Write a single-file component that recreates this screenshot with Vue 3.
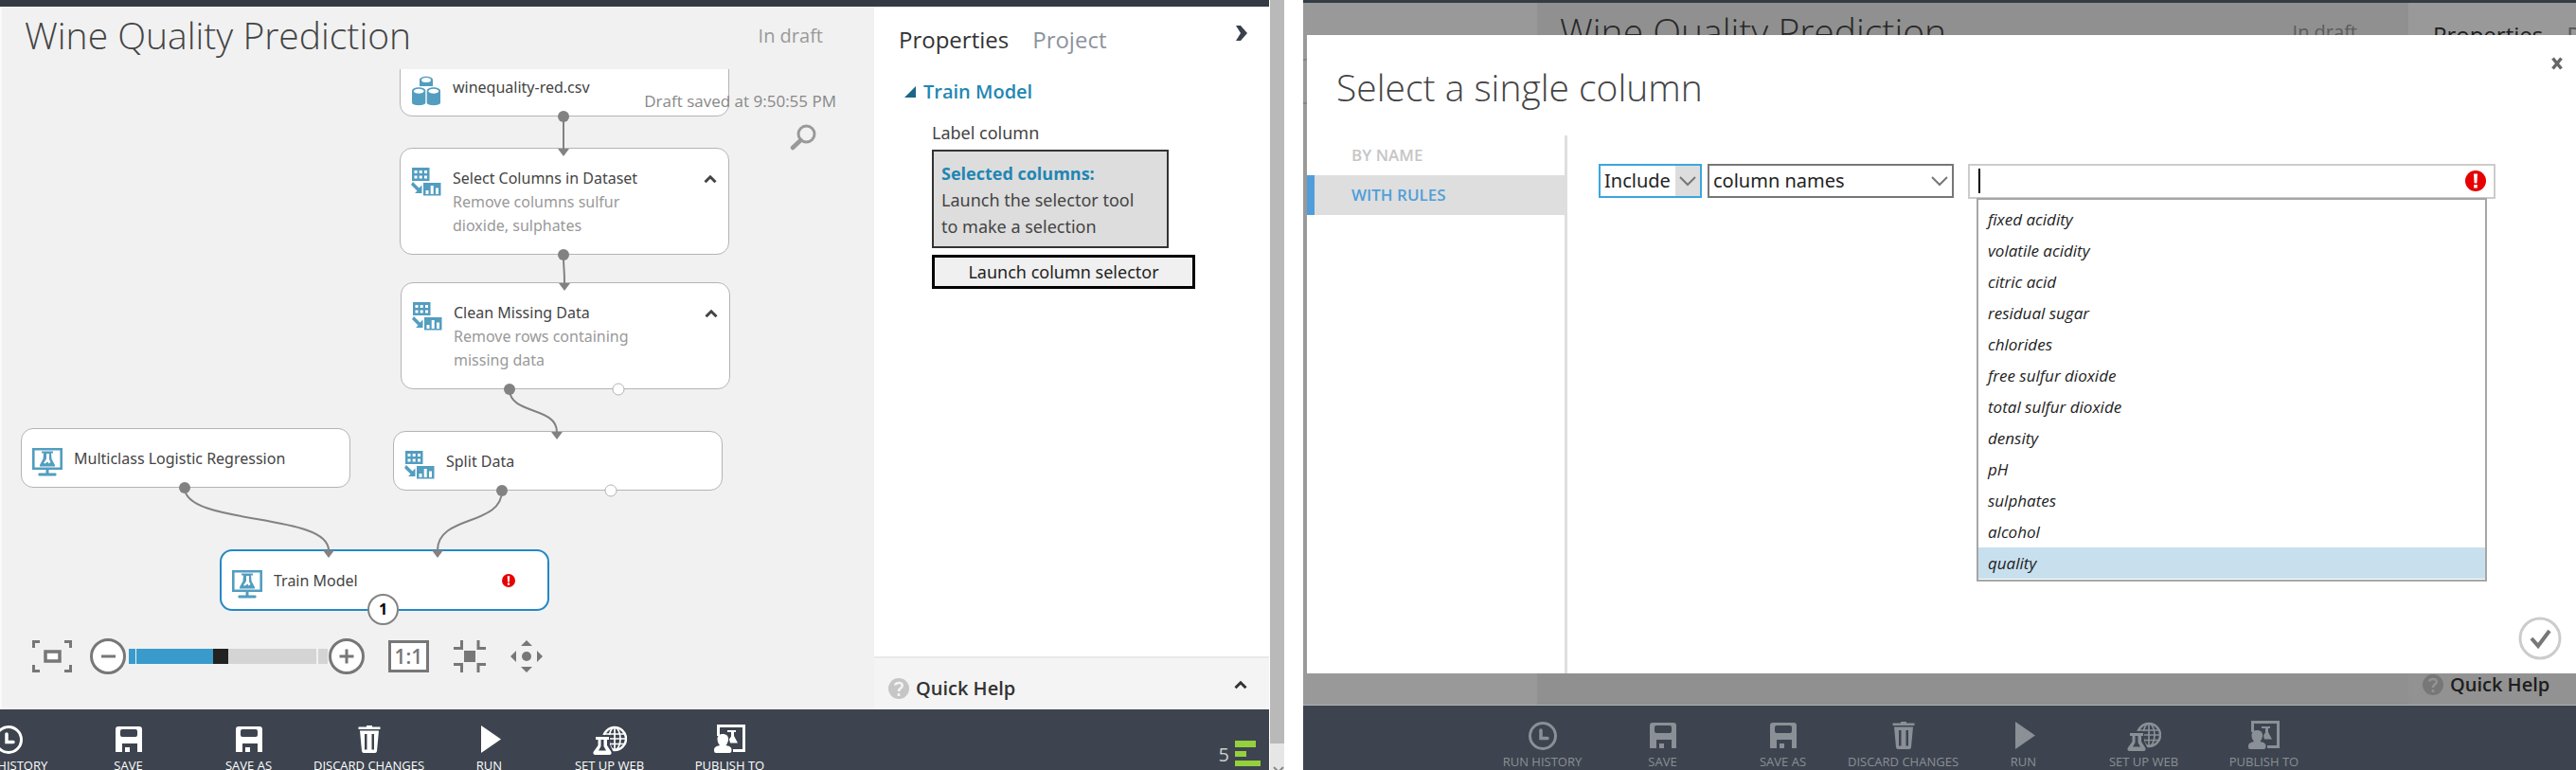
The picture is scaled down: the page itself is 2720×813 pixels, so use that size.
<script setup>
import { ref } from 'vue'

const nodes = [
  { id: 'csv', title: 'winequality-red.csv', icon: 'data', x: 422, y: -13, h: 63 },
  { id: 'select', title: 'Select Columns in Dataset', lines: ['Remove columns sulfur', 'dioxide, sulphates'], icon: 'transform', x: 422, y: 83, h: 113 },
  { id: 'clean', title: 'Clean Missing Data', lines: ['Remove rows containing', 'missing data'], icon: 'transform', x: 423, y: 225, h: 113 },
  { id: 'split', title: 'Split Data', icon: 'transform', x: 415, y: 382, h: 63 },
  { id: 'regression', title: 'Multiclass Logistic Regression', icon: 'model', x: 22, y: 379, h: 63 },
  { id: 'train', title: 'Train Model', icon: 'model', x: 232, y: 507, h: 65, selected: true },
]

const edges = [
  { from: [595, 50], to: [595, 84] },
  { from: [595, 196], to: [596, 226] },
  { from: [538, 338], to: [588, 383] },
  { from: [195, 442], to: [347, 508] },
  { from: [530, 445], to: [462, 508] },
]

const openPorts = [[653, 338], [645, 445]]

function curve({ from, to }) {
  const bend = Math.round((to[1] - from[1]) * 0.6)
  return `M${from[0]} ${from[1]}C${from[0]} ${from[1] + bend} ${to[0]} ${to[1] - bend} ${to[0]} ${to[1]}`
}

function arrow({ to }) {
  return `M${to[0] - 6} ${to[1]}h12l-6 8z`
}

const commands = [
  { label: ['RUN HISTORY'], icon: 'history' },
  { label: ['SAVE'], icon: 'save' },
  { label: ['SAVE AS'], icon: 'save' },
  { label: ['DISCARD CHANGES'], icon: 'trash' },
  { label: ['RUN'], icon: 'run' },
  { label: ['SET UP WEB', 'SERVICE'], icon: 'web' },
  { label: ['PUBLISH TO', 'GALLERY'], icon: 'publish' },
]

const columns = [
  'fixed acidity', 'volatile acidity', 'citric acid', 'residual sugar', 'chlorides',
  'free sulfur dioxide', 'total sulfur dioxide', 'density', 'pH', 'sulphates', 'alcohol', 'quality',
]
const highlighted = ref('quality')
const zoom = ref(46)
const columnText = ref('')
</script>

<template>
  <div class="page">
    <svg class="sprite" aria-hidden="true">
      <symbol id="i-data" viewBox="0 0 32 32">
        <g fill="#529dc0">
          <path d="M9 4.500C9 -.5 23 -.5 23 4.500V11H9z" />
          <path d="M1 16C1 11 15.300 11 15.300 16V28.500C15.300 32 1 32 1 28.500z" />
          <path d="M16.700 16C16.700 11 31 11 31 16V28.500C31 32 16.700 32 16.700 28.500z" />
        </g>
        <g fill="#fff">
          <ellipse cx="16" cy="4.500" rx="5" ry="2.500" />
          <ellipse cx="8.200" cy="16.300" rx="5.300" ry="2.500" />
          <ellipse cx="23.800" cy="16.300" rx="5.300" ry="2.500" />
        </g>
      </symbol>
      <symbol id="i-transform" viewBox="0 0 32 32">
        <path fill="#529dc0" d="M1 1h18.500v14H1zM13 17h18.500v13.500H13zM2 16l6.500 6.500 3-3V28H4l2.500-2.500L0 19z" />
        <path fill="#fff" d="M3.500 4h3v3h-3zM8.700 4h3v3h-3zM14 4h3v3h-3zM3.500 9.500h3v3h-3zM8.700 9.500h3v3h-3zM14 9.500h3v3h-3zM15.500 25h3v4h-3zM20.700 20h3v9h-3zM26 22.500h3V29h-3z" />
      </symbol>
      <symbol id="i-model" viewBox="0 0 32 32">
        <path fill="none" stroke="#529dc0" stroke-width="2.600" d="M1.300 2.300h29.400v20.500H1.300z" />
        <path fill="#529dc0" d="M14.500 23h3v4.500h7c1.500 0 1.500 3 0 3h-17c-1.500 0-1.500-3 0-3h7zM10 4.500h12v2h-2l.500 6 3.500 6.500v1.500H8V19l3.500-6.500.500-6H10z" />
        <path fill="#fff" d="M15 7h3v6l1.500 3-2 1.500-1-2-3 2-1.500-.5L15 12.500z" />
      </symbol>
      <symbol id="i-caret-up" viewBox="0 0 14 10">
        <path fill="none" stroke="currentColor" stroke-width="3" d="M1.500 8.300 7 2.800l5.500 5.500" />
      </symbol>
      <symbol id="i-alert" viewBox="0 0 22 22">
        <circle cx="11" cy="11" r="11" fill="#e60000" />
        <path fill="#fff" d="M9 3.500h4l-.6 10H9.600zM9.200 15h3.600v3.500H9.200z" />
      </symbol>
      <symbol id="i-help" viewBox="0 0 22 22">
        <circle cx="11" cy="11" r="11" fill="#c6c6c6" />
        <path fill="none" stroke="#f4f4f4" stroke-width="2.600" d="M7 7.500C8 4 15 4 14.800 8c0 2.500-3.800 2.800-3.800 6M11 16v3" />
      </symbol>
      <symbol id="i-history" viewBox="0 0 36 32">
        <circle cx="18" cy="16" r="13.500" fill="none" stroke="currentColor" stroke-width="3" />
        <path fill="none" stroke="currentColor" stroke-width="3.500" stroke-linecap="round" d="M16 10v8.500h7" />
      </symbol>
      <symbol id="i-save" viewBox="0 0 36 32">
        <path fill="currentColor" fill-rule="evenodd" d="M7 2h22q3 0 3 3v24h-5v-9H11v9H4V5q0-3 3-3zM11 5q-2 0-2 2v4q0 2 2 2h14q2 0 2-2V7q0-2-2-2zM14 24h5v5h-5z" />
      </symbol>
      <symbol id="i-trash" viewBox="0 0 36 32">
        <path fill="currentColor" fill-rule="evenodd" d="M15 1h6v1.500h8.500v2.500H6.500V2.500H15zM8 6.500h20L26 28q-.3 2-2 2H12q-1.700 0-2-2zM13 10v16.500h2.500V10zM20.500 10v16.500H23V10z" />
      </symbol>
      <symbol id="i-run" viewBox="0 0 36 32">
        <path fill="currentColor" d="M9 1 30 15.500 9 30z" />
      </symbol>
      <symbol id="i-web" viewBox="0 0 36 32">
        <g fill="none" stroke="currentColor" stroke-width="1.700">
          <circle cx="23" cy="15" r="12" stroke-width="2.500" />
          <ellipse cx="23" cy="15" rx="6" ry="12" />
          <path d="M23 3v24M12 10h22M11 15h24M12 20.500h22" />
        </g>
        <path fill="#3d444f" d="M0 11h18v10l5 11H0z" />
        <path fill="currentColor" fill-rule="evenodd" d="M3 13h14v3h-2v6l4.500 7q.5 3-2 3H2.500Q0 32 .5 29L5.500 22v-6H3zM8.500 16v7L6 27.500h8L11.500 23v-7z" />
      </symbol>
      <symbol id="i-publish" viewBox="0 0 36 32">
        <path fill="none" stroke="currentColor" stroke-width="3" d="M5.500 12V1.500h27v26H21" />
        <path fill="currentColor" d="M10 10c8 0 7 8 3.500 12 5 1 6 2.500 6 5 0 3-2 3-3 3h-13C2.500 30 1 30 1 27c0-2.500 1.500-4 6-5-3.500-4-4-12 3-12zM15 6h9v2h-2v4l4 7.500h-8l-1-4 2-3V8h-4z" />
      </symbol>
    </svg>

    <section class="screen screen-editor">
      <div class="topbar"></div>
      <div class="workspace">
        <main class="experiment">
          <header class="experiment-head">
            <h1>Wine Quality Prediction</h1>
            <span class="status">In draft</span>
          </header>
          <div class="canvas">
            <article
              v-for="n in nodes"
              :key="n.id"
              class="node"
              :class="{ selected: n.selected }"
              :style="{ left: n.x + 'px', top: n.y + 'px', height: n.h + 'px' }"
            >
              <svg class="node-icon"><use :href="'#i-' + n.icon" /></svg>
              <div class="node-text">
                <h2>{{ n.title }}</h2>
                <p v-for="line in n.lines" :key="line">{{ line }}</p>
              </div>
              <button v-if="n.lines" class="plain node-toggle" aria-label="Collapse">
                <svg width="14" height="10"><use href="#i-caret-up" /></svg>
              </button>
              <svg v-if="n.selected" class="node-alert"><use href="#i-alert" /></svg>
            </article>
            <svg class="edges" aria-hidden="true">
              <g v-for="(e, i) in edges" :key="i">
                <path class="edge" :d="curve(e)" />
                <path class="head" :d="arrow(e)" />
                <circle class="head" :cx="e.from[0]" :cy="e.from[1]" r="6" />
              </g>
              <circle v-for="(p, i) in openPorts" :key="'p' + i" class="open-port" :cx="p[0]" :cy="p[1]" r="6" />
            </svg>
            <span class="port-badge">1</span>

            <div class="canvas-info">
              <span>Draft saved at 9:50:55 PM</span>
              <button class="plain search" aria-label="Search">
                <svg width="28" height="28" viewBox="0 0 28 28" fill="none" stroke="#999">
                  <circle cx="17.500" cy="10.500" r="8.500" stroke-width="3" />
                  <path d="M11.500 17 3 25" stroke-width="4.500" stroke-linecap="round" />
                </svg>
              </button>
            </div>

            <div class="zoombar">
              <button class="plain fit" aria-label="Zoom to fit">
                <svg width="42" height="34" viewBox="0 0 42 34" fill="none" stroke="#777" stroke-width="3">
                  <path d="M1.500 8V1.500H8M34 1.500h6.500V8M1.500 26v6.500H8M34 32.500h6.500V26" />
                  <path fill="#fff" stroke-width="3.500" d="M14 12h15v10H14z" />
                </svg>
              </button>
              <button class="plain" aria-label="Zoom out">
                <svg width="38" height="38" viewBox="0 0 38 38" fill="#fff" stroke="#777" stroke-width="3">
                  <circle cx="19" cy="19" r="17.500" /><path d="M12 19h15" />
                </svg>
              </button>
              <input v-model="zoom" class="zoom" type="range" min="0" max="100" aria-label="Zoom" />
              <button class="plain" aria-label="Zoom in">
                <svg width="38" height="38" viewBox="0 0 38 38" fill="#fff" stroke="#777" stroke-width="3">
                  <circle cx="19" cy="19" r="17.500" /><path d="M11.500 19h15M19 11.500v15" />
                </svg>
              </button>
              <button class="actual">1:1</button>
              <button class="plain shrink" aria-label="Collapse all">
                <svg width="34" height="34" viewBox="0 0 34 34" fill="none" stroke="#777" stroke-width="3">
                  <path d="M0 8.500h8.500V0M26 0v8.500h8M0 25.500h8.500V34M26 34v-8.500h8" />
                  <path fill="#777" stroke="none" d="M11 11h12v12H11z" />
                </svg>
              </button>
              <button class="plain" aria-label="Pan">
                <svg width="34" height="34" viewBox="0 0 34 34" fill="#777">
                  <circle cx="17" cy="17" r="5" />
                  <path d="M17 0l6 6H11zM17 34l6-6H11zM0 17l6-6v12zM34 17l-6-6v12z" />
                </svg>
              </button>
            </div>
          </div>
        </main>

        <aside class="properties">
          <nav class="panel-tabs">
            <a href="#properties" class="active">Properties</a>
            <a href="#project">Project</a>
            <button class="plain" aria-label="Collapse panel">
              <svg width="14" height="18" viewBox="0 0 14 18"><path fill="#3a414c" d="M1 1h5l7 8-7 8H1l5-8z" /></svg>
            </button>
          </nav>
          <h3>
            <svg width="12" height="12" viewBox="0 0 12 12"><path fill="#1b6688" d="M12 0v12H0z" /></svg>
            Train Model
          </h3>
          <div class="field">
            <span>Label column</span>
            <div class="selection">
              <strong>Selected columns:</strong>
              Launch the selector tool to make a selection
            </div>
            <button class="launch">Launch column selector</button>
          </div>
          <footer class="quick-help">
            <svg width="22" height="22"><use href="#i-help" /></svg>
            <b>Quick Help</b>
            <button class="plain" aria-label="Expand help">
              <svg width="14" height="10"><use href="#i-caret-up" /></svg>
            </button>
          </footer>
        </aside>
      </div>
      <footer class="commandbar">
        <button v-for="c in commands" :key="c.label[0]" class="plain command">
          <svg width="36" height="32"><use :href="'#i-' + c.icon" /></svg>
          <span v-for="l in c.label" :key="l">{{ l }}</span>
        </button>
        <div class="jobs">
          <span>5</span>
          <svg width="28" height="28" viewBox="0 0 28 28" fill="#94d13d"><path d="M0 0h22v7H0zM0 11h12v6H0zM0 21h27v6H0z" /></svg>
        </div>
      </footer>
    </section>

    <div class="scrollbar">
      <div class="scroll-thumb"></div>
      <svg width="15" height="28" viewBox="0 0 15 28" fill="none" stroke="#888" stroke-width="2"><path d="m4 25 5 5 5-5" /></svg>
    </div>

    <section class="screen screen-dialog">
      <div class="topbar"></div>
      <div class="workspace dimmed">
        <aside class="experiments-list"><i></i><i></i></aside>
        <main class="experiment">
          <header class="experiment-head">
            <h1>Wine Quality Prediction</h1>
            <span class="status">In draft</span>
          </header>
        </main>
        <aside class="properties">
          <nav class="panel-tabs">
            <a href="#properties" class="active">Properties</a>
            <a href="#project">Project</a>
          </nav>
          <footer class="quick-help">
            <svg width="22" height="22"><use href="#i-help" /></svg>
            <b>Quick Help</b>
          </footer>
        </aside>
      </div>
      <footer class="commandbar">
        <button v-for="c in commands" :key="c.label[0]" class="plain command" disabled>
          <svg width="36" height="32"><use :href="'#i-' + c.icon" /></svg>
          <span v-for="l in c.label" :key="l">{{ l }}</span>
        </button>
      </footer>

      <div class="dialog" role="dialog" aria-labelledby="dialog-title">
        <header class="dialog-head">
          <h1 id="dialog-title">Select a single column</h1>
          <button class="plain" aria-label="Close">
            <svg width="12" height="14" viewBox="0 0 12 14"><path stroke="#666" stroke-width="3.500" d="m1.500 1.500 9 11m0-11-9 11" /></svg>
          </button>
        </header>
        <div class="dialog-body">
          <nav class="modes">
            <a href="#by-name">BY NAME</a>
            <a href="#with-rules" class="active">WITH RULES</a>
          </nav>
          <div class="rules">
            <div class="rule">
              <div class="picker picker-focus">
                <select aria-label="Rule action"><option>Include</option><option>Exclude</option></select>
                <svg width="26" height="32" viewBox="0 0 26 32"><path d="m5 12 8 8 8-8" /></svg>
              </div>
              <div class="picker picker-wide">
                <select aria-label="Rule kind"><option>column names</option><option>column indices</option></select>
                <svg width="26" height="32" viewBox="0 0 26 32"><path d="m5 12 8 8 8-8" /></svg>
              </div>
              <div class="combo">
                <input v-model="columnText" type="text" aria-label="Column" />
                <span class="caret"></span>
                <svg class="combo-alert"><use href="#i-alert" /></svg>
                <ul class="options" role="listbox" aria-label="Columns">
                  <li
                    v-for="c in columns"
                    :key="c"
                    role="option"
                    :aria-selected="c === highlighted"
                    :class="{ on: c === highlighted }"
                  >{{ c }}</li>
                </ul>
              </div>
            </div>
            <button class="plain confirm" aria-label="OK">
              <svg width="46" height="46" viewBox="0 0 46 46" fill="none">
                <circle cx="23" cy="23" r="21" stroke="#ccc" stroke-width="3" />
                <path stroke="#777" stroke-width="4" d="m14 23 7 8L33 15" />
              </svg>
            </button>
          </div>
        </div>
      </div>
    </section>
  </div>
</template>

<style>
body {
  margin: 0;
  overflow: hidden;
  background: #fff;
}
</style>

<style scoped>
.page {
  display: flex;
  height: 100vh;
  overflow: hidden;
  font-family: "Open Sans", "Noto Sans", sans-serif;
  color: #444;
}
.page * {
  box-sizing: border-box;
}
.sprite {
  position: absolute;
  width: 0;
  height: 0;
}
h1, h2, h3, p, ul {
  margin: 0;
  padding: 0;
  font-weight: 400;
}
a {
  text-decoration: none;
  color: inherit;
}
button {
  font-family: inherit;
}
svg {
  display: block;
  flex: none;
}
.plain {
  border: 0;
  padding: 0;
  background: none;
  color: inherit;
}
.screen {
  position: relative;
  display: flex;
  flex-direction: column;
  min-width: 0;
  overflow: hidden;
}
.screen-editor {
  flex: 1340 1 0;
}
.screen-dialog {
  flex: 1344 1 0;
  margin-left: 20px;
}
.topbar {
  flex: none;
  height: 7px;
  background: #343b44;
}
.screen-dialog .topbar {
  height: 3px;
}
.workspace {
  position: relative;
  display: flex;
  flex: 1;
  min-height: 0;
}
.experiment {
  display: flex;
  flex-direction: column;
  flex: 1;
  min-width: 0;
  background: #f1f1f1;
}
.screen-editor .experiment {
  box-shadow: inset 2px 0 #fafafa;
}
.experiment-head {
  display: flex;
  justify-content: space-between;
  flex: none;
  height: 66px;
  padding: 0 54px 0 26px;
}
h1 {
  font-size: 39px;
  line-height: 60px;
  font-weight: 300;
  white-space: nowrap;
}
.status {
  font-size: 20px;
  line-height: 62px;
  color: #999;
}

/* Experiment canvas */
.canvas {
  position: relative;
  flex: 1;
  min-height: 0;
  overflow: hidden;
}
.node {
  position: absolute;
  display: flex;
  width: 348px;
  padding: 19px 12px 0 11px;
  border: 1px solid #b4b4b4;
  border-radius: 13px;
  background: #fff;
}
.node.selected {
  border: 2px solid #2488c6;
}
.node-icon {
  width: 32px;
  height: 32px;
  margin-right: 12px;
}
.node-text {
  flex: 1;
  font-family: "Noto Sans", "Open Sans", sans-serif;
  font-size: 16px;
  line-height: 25px;
  white-space: nowrap;
  color: #999;
}
.node-text h2 {
  font-size: 16px;
  line-height: 25px;
  color: #444;
}
.node-toggle {
  align-self: flex-start;
  padding-top: 8px;
}
.node-alert {
  width: 14px;
  height: 14px;
  margin: 5px 22px 0 0;
}
.edges {
  position: absolute;
  inset: 0;
  width: 100%;
  height: 100%;
}
.edge {
  fill: none;
  stroke: #828282;
  stroke-width: 2;
}
.head {
  fill: #828282;
}
.open-port {
  fill: #fff;
  stroke: #b4b4b4;
}
.port-badge {
  position: absolute;
  left: 388px;
  top: 554px;
  width: 33px;
  height: 33px;
  border: 2px solid #828282;
  border-radius: 50%;
  background: #fff;
  color: #000;
  font-size: 16px;
  line-height: 29px;
  font-weight: 700;
  text-align: center;
}
.canvas-info {
  position: absolute;
  top: 21px;
  right: 40px;
  display: flex;
  flex-direction: column;
  align-items: flex-end;
  gap: 11px;
  font-size: 17px;
  line-height: 26px;
  color: #888;
}
.search {
  margin-right: 21px;
}
.zoombar {
  position: absolute;
  left: 34px;
  bottom: 37px;
  display: flex;
  align-items: center;
}
.fit {
  margin-right: 19px;
}
.zoom {
  appearance: none;
  width: 210px;
  height: 16px;
  margin: 0 1px 0 3px;
  background: linear-gradient(90deg, #389bcc 7px, #f1f1f1 7px 8px, #389bcc 8px 95px, #d4d4d4 95px 198px, #f1f1f1 198px 200px, #d4d4d4 200px);
}
.zoom::-webkit-slider-thumb {
  appearance: none;
  width: 16px;
  height: 16px;
  background: #222;
}
.actual {
  width: 43px;
  height: 34px;
  margin: 0 26px 0 25px;
  padding: 0;
  border: 3px solid #777;
  background: #fff;
  font-size: 21px;
  line-height: 26px;
  font-weight: 600;
  color: #777;
}
.shrink {
  margin-right: 26px;
}

/* Properties panel */
.properties {
  display: flex;
  flex-direction: column;
  flex: none;
  width: 417px;
  overflow: hidden;
  background: #fff;
}
.panel-tabs {
  display: flex;
  flex: none;
  gap: 25px;
  padding: 18px 22px 0 26px;
  font-size: 24px;
  line-height: 34px;
  color: #8d939c;
}
.panel-tabs .active {
  color: #333;
}
.panel-tabs button {
  align-self: flex-start;
  margin-left: auto;
  padding-top: 1px;
}
.properties h3 {
  display: flex;
  align-items: center;
  gap: 8px;
  padding: 23px 0 0 32px;
  font-size: 20px;
  line-height: 30px;
  font-weight: 600;
  color: #1f86b3;
}
.field {
  display: flex;
  flex-direction: column;
  align-items: flex-start;
  flex: 1;
  padding: 10px 0 0 61px;
  font-family: "Noto Sans", "Open Sans", sans-serif;
  font-size: 18px;
  line-height: 28px;
}
.field > span {
  line-height: 36px;
}
.selection {
  width: 250px;
  height: 104px;
  padding: 9px 22px 0 8px;
  border: 2px solid #333;
  background: #ddd;
}
.selection strong {
  display: block;
  font-family: "Open Sans", "Noto Sans", sans-serif;
  white-space: nowrap;
  color: #1f86b3;
}
.launch {
  width: 278px;
  height: 36px;
  margin-top: 7px;
  padding: 0;
  border: 3px solid #000;
  background: #f0f0f0;
  font-size: 18px;
  line-height: 30px;
  color: #222;
}
.quick-help {
  display: flex;
  align-items: center;
  flex: none;
  gap: 7px;
  height: 56px;
  margin-top: auto;
  padding: 10px 23px 0 15px;
  border-top: 2px solid #e9e9e9;
  background: #f4f4f4;
  color: #333;
}
.quick-help b {
  font-size: 20px;
  line-height: 30px;
  font-weight: 600;
}
.quick-help button {
  margin: 0 0 8px auto;
}

/* Command bar */
.commandbar {
  display: flex;
  flex: none;
  height: 64px;
  overflow: hidden;
  background: #3d444f;
  color: #fff;
}
.command {
  display: flex;
  flex-direction: column;
  align-items: center;
  flex: none;
  width: 127px;
  height: 90px;
  padding-top: 16px;
  font-size: 13px;
  line-height: 14px;
  white-space: nowrap;
}
.command svg {
  margin-bottom: 4px;
}
.screen-editor .command:first-child {
  margin-left: -55px;
}
.jobs {
  display: flex;
  gap: 6px;
  margin: 33px 8px 0 auto;
  font-size: 20px;
  line-height: 30px;
  color: #ccc;
}

/* Scrollbar between the two screens */
.scrollbar {
  display: flex;
  flex-direction: column;
  flex: none;
  width: 15px;
  margin-left: 1px;
  overflow: hidden;
  background: #e6e6e6;
}
.scroll-thumb {
  flex: 1;
  background: #b9b9b9;
}

/* Dimmed editor behind the dialog */
.dimmed::after {
  content: "";
  position: absolute;
  inset: 0;
  background: rgba(0, 0, 0, 0.4);
}
.experiments-list {
  display: flex;
  flex-direction: column;
  gap: 44px;
  flex: none;
  width: 247px;
  padding-top: 59px;
  background: #fff;
}
.experiments-list i {
  height: 2px;
  background: #ddd;
}
.dimmed .properties {
  width: 177px;
}
.dimmed .quick-help {
  height: 34px;
  padding-top: 0;
  padding-bottom: 8px;
  border: 0;
}
.dimmed .experiment-head {
  padding-left: 24px;
}
.dimmed .panel-tabs {
  padding-top: 17px;
}
.screen-dialog .commandbar {
  height: 69px;
  border-top: 1px solid #b0b4b8;
  padding-left: 189px;
  color: #8b8f96;
}

/* Dialog */
.dialog {
  position: absolute;
  top: 37px;
  right: 0;
  bottom: 102px;
  left: 4px;
  display: flex;
  flex-direction: column;
  background: #fff;
}
.dialog-head {
  display: flex;
  justify-content: space-between;
  flex: none;
  height: 106px;
  padding: 25px 14px 0 31px;
}
.dialog-head button {
  align-self: flex-start;
  margin-top: -2px;
}
.dialog-body {
  display: flex;
  flex: 1;
  min-height: 0;
}
.modes {
  display: flex;
  flex-direction: column;
  flex: none;
  width: 275px;
  border-right: 3px solid #dedede;
  font-size: 17px;
  line-height: 42px;
  font-weight: 600;
  color: #c6c6c6;
}
.modes a {
  padding-left: 47px;
}
.modes .active {
  padding-left: 39px;
  border-left: 8px solid #4f9edb;
  background: #dedede;
  color: #4f9edb;
}
.rules {
  display: flex;
  flex-direction: column;
  justify-content: space-between;
  flex: 1;
  padding: 30px 15px 14px 33px;
}
.rule {
  display: flex;
  padding-right: 70px;
}
.picker {
  display: flex;
  width: 109px;
  height: 36px;
  margin-right: 6px;
  border: 2px solid #777;
}
.picker-focus {
  border-color: #3aa6de;
}
.picker-focus svg {
  background: #ddd;
}
.picker-wide {
  width: 260px;
  margin-right: 15px;
}
.picker select {
  appearance: none;
  flex: 1;
  min-width: 0;
  padding: 0 0 0 4px;
  border: 0;
  background: #fff;
  font-family: "Noto Sans", sans-serif;
  font-size: 20px;
  line-height: 30px;
  color: #222;
}
.picker svg {
  fill: none;
  stroke: #777;
  stroke-width: 2;
}
.combo {
  position: relative;
  flex: 1;
}
.combo input {
  display: block;
  width: 100%;
  height: 37px;
  padding: 0 44px 0 10px;
  border: 2px solid #ccc;
  font-family: inherit;
  font-size: 20px;
}
.caret {
  position: absolute;
  left: 11px;
  top: 5px;
  width: 2px;
  height: 26px;
  background: #000;
}
.combo-alert {
  position: absolute;
  top: 7px;
  right: 10px;
  width: 22px;
  height: 22px;
}
.options {
  position: absolute;
  top: 36px;
  right: 9px;
  left: 9px;
  padding: 4px 0 1px;
  border: 2px solid #a6a6a6;
  background: #fff;
  list-style: none;
  font-size: 17px;
  line-height: 33px;
  font-style: italic;
  color: #222;
}
.options li {
  padding-left: 10px;
}
.options .on {
  background: #c8e0ee;
}
.confirm {
  align-self: flex-end;
}
</style>
